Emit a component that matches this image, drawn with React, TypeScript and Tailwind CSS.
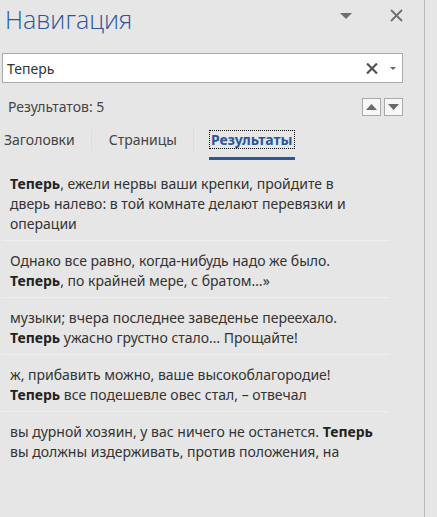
import React from 'react';

const FONT = { fontFamily: '"Segoe UI", "Noto Sans", "Open Sans", sans-serif' };

// each result is a list of lines; **word** marks the bold hit
const RESULTS: string[][] = [
  [
    '**Теперь**, ежели нервы ваши крепки, пройдите в',
    'дверь налево: в той комнате делают перевязки и',
    'операции',
  ],
  ['Однако все равно, когда-нибудь надо же было.', '**Теперь**, по крайней мере, с братом…»'],
  ['музыки; вчера последнее заведенье переехало.', '**Теперь** ужасно грустно стало… Прощайте!'],
  ['ж, прибавить можно, ваше высокоблагородие!', '**Теперь** все подешевле овес стал, – отвечал'],
  ['вы дурной хозяин, у вас ничего не останется. **Теперь**', 'вы должны издерживать, против положения, на'],
];

function Line({ text }: { text: string }) {
  const parts = text.split('**');
  return (
    <div className="whitespace-nowrap">
      {parts.map((p, i) =>
        i % 2 === 1 ? (
          <b key={i} className="font-bold text-[#222]">
            {p}
          </b>
        ) : (
          <span key={i}>{p}</span>
        )
      )}
    </div>
  );
}

export default function App() {
  return (
    <div className="flex h-[517px] w-[437px] overflow-hidden bg-[#e6e6e6]" style={FONT}>
      <div className="flex w-[424px] flex-col">
        {/* header */}
        <div className="flex h-[40px] items-start">
          <h1
            className="ml-[5px] mt-[2px] text-[25px] font-light leading-[34px] text-[#2b579a]"
            style={{ fontFamily: '"Segoe UI Light", "Open Sans", "Noto Sans", sans-serif' }}
          >
            Навигация
          </h1>
          <div className="ml-auto mr-[21px] mt-[9px] flex items-center gap-[38px]">
            <svg width="12" height="6" viewBox="0 0 12 6">
              <path d="M0 0h12L6 6z" fill="#6f6f6f" />
            </svg>
            <svg width="13" height="13" viewBox="0 0 13 13">
              <path d="M1 1l11 11M12 1L1 12" stroke="#6f6f6f" strokeWidth="1.8" />
            </svg>
          </div>
        </div>

        {/* search box */}
        <div className="ml-[2px] mt-[13px] flex h-[30px] w-[401px] items-center border border-[#ababab] bg-white">
          <span className="ml-[4px] text-[14px] text-[#333]">Теперь</span>
          <svg className="ml-auto" width="12" height="11" viewBox="0 0 12 11">
            <path d="M1 0.5l10 10M11 0.5l-10 10" stroke="#555" strokeWidth="2.2" />
          </svg>
          <svg className="ml-[12px] mr-[6px]" width="6" height="3" viewBox="0 0 6 3">
            <path d="M0 0h6L3 3z" fill="#666" />
          </svg>
        </div>

        {/* results count */}
        <div className="mt-[14px] flex h-[19px] items-center">
          <span className="ml-[8px] text-[14px] text-[#444]">Результатов: 5</span>
          <div className="ml-auto mr-[21px] flex gap-[3px]">
            <div className="flex h-[18px] w-[19px] items-center justify-center border border-[#aaa] bg-[#f7f7f7]">
              <svg width="11" height="6" viewBox="0 0 11 6">
                <path d="M0 6h11L5.5 0z" fill="#6a6a6a" />
              </svg>
            </div>
            <div className="flex h-[18px] w-[19px] items-center justify-center border border-[#aaa] bg-[#f7f7f7]">
              <svg width="11" height="6" viewBox="0 0 11 6">
                <path d="M0 0h11L5.5 6z" fill="#6a6a6a" />
              </svg>
            </div>
          </div>
        </div>

        {/* tabs */}
        <div className="mt-[14px] flex h-[31px] items-start text-[14px] text-[#444]">
          <div className="ml-[4px] flex h-[19px] items-center">Заголовки</div>
          <div className="ml-[16px] mt-[-1px] h-[22px] w-px bg-[#dcdcdc]" />
          <div className="ml-[17px] flex h-[19px] items-center">Страницы</div>
          <div className="ml-[16px] mt-[-1px] h-[22px] w-px bg-[#dcdcdc]" />
          <div className="ml-[15px] flex flex-col">
            <div className="flex h-[19px] items-center border border-dotted border-black px-px font-bold text-[#2b579a]">
              Результаты
            </div>
            <div className="mt-[8px] h-[3px] bg-[#2b579a]" />
          </div>
        </div>

        {/* results list */}
        <div className="mt-[3px] flex flex-col">
          {RESULTS.map((lines, i) => (
            <div
              key={i}
              className={`ml-[2px] w-[387px] pb-[6px] pl-[8px] pt-[10px] text-[14px] leading-[20px] text-[#333] ${
                i < RESULTS.length - 1 ? 'border-b border-[#eeeeee]' : ''
              }`}
            >
              {lines.map((l, j) => (
                <Line key={j} text={l} />
              ))}
            </div>
          ))}
        </div>
      </div>
      <div className="h-full w-px bg-[#bcbcbc]" />
      <div className="flex-1" />
    </div>
  );
}
